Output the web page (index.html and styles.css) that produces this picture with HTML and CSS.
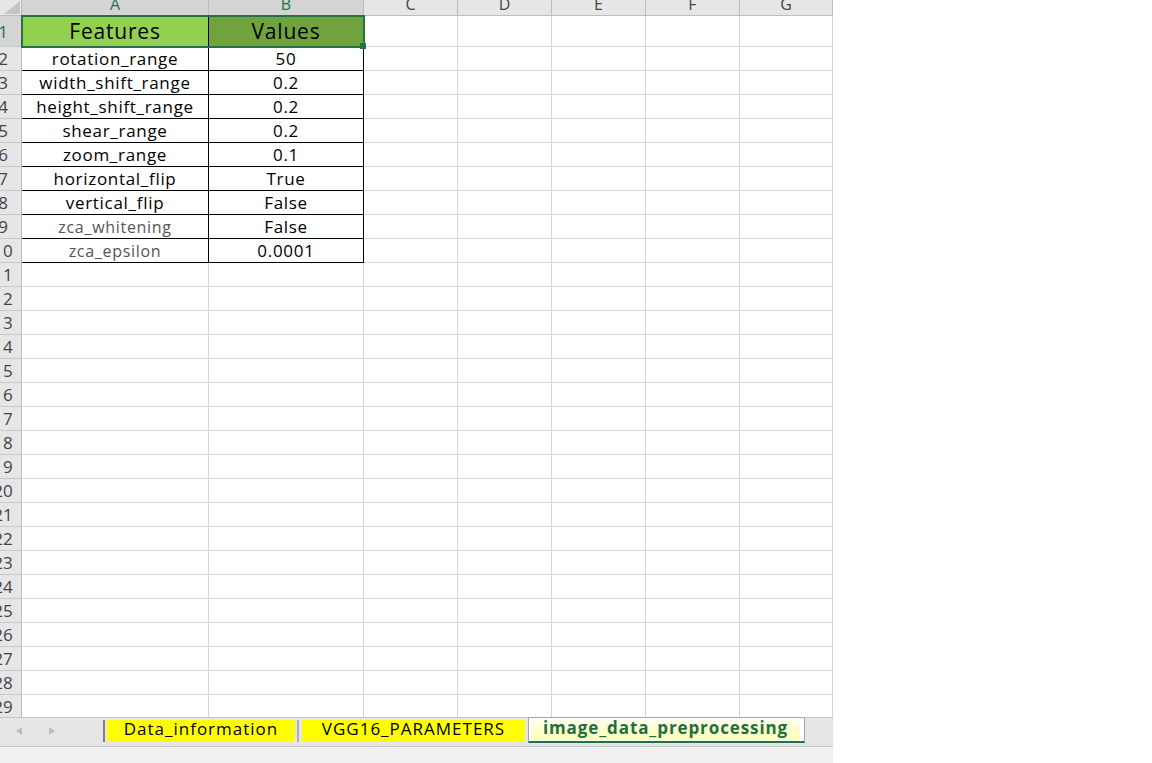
FILE: index.html
```html
<!DOCTYPE html>
<html>
<head>
<meta charset="utf-8">
<link rel="stylesheet" href="styles.css">
</head>
<body>
<div class="app">
  <div class="sheet">
    <div class="row head">
      <div class="corner"><svg width="21" height="15" viewBox="0 0 21 15"><polygon points="4,14 20,14 20,1" fill="#c4c4c4"/></svg></div>
      <div class="ch sel-h">A</div><div class="ch sel-h">B</div><div class="ch">C</div><div class="ch">D</div><div class="ch">E</div><div class="ch">F</div><div class="ch">G</div>
    </div>
    <div class="row r1">
      <div class="rh sel-r">1</div><div class="t f">Features</div><div class="t v">Values</div><div></div><div></div><div></div><div></div><div></div>
    </div>
    <div class="row"><div class="rh">2</div><div class="t">rotation_range</div><div class="t">50</div><div></div><div></div><div></div><div></div><div></div></div>
    <div class="row"><div class="rh">3</div><div class="t">width_shift_range</div><div class="t">0.2</div><div></div><div></div><div></div><div></div><div></div></div>
    <div class="row"><div class="rh">4</div><div class="t">height_shift_range</div><div class="t">0.2</div><div></div><div></div><div></div><div></div><div></div></div>
    <div class="row"><div class="rh">5</div><div class="t">shear_range</div><div class="t">0.2</div><div></div><div></div><div></div><div></div><div></div></div>
    <div class="row"><div class="rh">6</div><div class="t">zoom_range</div><div class="t">0.1</div><div></div><div></div><div></div><div></div><div></div></div>
    <div class="row"><div class="rh">7</div><div class="t">horizontal_flip</div><div class="t">True</div><div></div><div></div><div></div><div></div><div></div></div>
    <div class="row"><div class="rh">8</div><div class="t">vertical_flip</div><div class="t">False</div><div></div><div></div><div></div><div></div><div></div></div>
    <div class="row"><div class="rh">9</div><div class="t z">zca_whitening</div><div class="t">False</div><div></div><div></div><div></div><div></div><div></div></div>
    <div class="row"><div class="rh">10</div><div class="t z">zca_epsilon</div><div class="t">0.0001</div><div></div><div></div><div></div><div></div><div></div></div>
    <div class="row"><div class="rh">11</div><div></div><div></div><div></div><div></div><div></div><div></div><div></div></div>
    <div class="row"><div class="rh">12</div><div></div><div></div><div></div><div></div><div></div><div></div><div></div></div>
    <div class="row"><div class="rh">13</div><div></div><div></div><div></div><div></div><div></div><div></div><div></div></div>
    <div class="row"><div class="rh">14</div><div></div><div></div><div></div><div></div><div></div><div></div><div></div></div>
    <div class="row"><div class="rh">15</div><div></div><div></div><div></div><div></div><div></div><div></div><div></div></div>
    <div class="row"><div class="rh">16</div><div></div><div></div><div></div><div></div><div></div><div></div><div></div></div>
    <div class="row"><div class="rh">17</div><div></div><div></div><div></div><div></div><div></div><div></div><div></div></div>
    <div class="row"><div class="rh">18</div><div></div><div></div><div></div><div></div><div></div><div></div><div></div></div>
    <div class="row"><div class="rh">19</div><div></div><div></div><div></div><div></div><div></div><div></div><div></div></div>
    <div class="row"><div class="rh">20</div><div></div><div></div><div></div><div></div><div></div><div></div><div></div></div>
    <div class="row"><div class="rh">21</div><div></div><div></div><div></div><div></div><div></div><div></div><div></div></div>
    <div class="row"><div class="rh">22</div><div></div><div></div><div></div><div></div><div></div><div></div><div></div></div>
    <div class="row"><div class="rh">23</div><div></div><div></div><div></div><div></div><div></div><div></div><div></div></div>
    <div class="row"><div class="rh">24</div><div></div><div></div><div></div><div></div><div></div><div></div><div></div></div>
    <div class="row"><div class="rh">25</div><div></div><div></div><div></div><div></div><div></div><div></div><div></div></div>
    <div class="row"><div class="rh">26</div><div></div><div></div><div></div><div></div><div></div><div></div><div></div></div>
    <div class="row"><div class="rh">27</div><div></div><div></div><div></div><div></div><div></div><div></div><div></div></div>
    <div class="row"><div class="rh">28</div><div></div><div></div><div></div><div></div><div></div><div></div><div></div></div>
    <div class="row"><div class="rh">29</div><div></div><div></div><div></div><div></div><div></div><div></div><div></div></div>
    <div class="selection"></div>
    <div class="handle"></div>
  </div>
  <div class="tabs">
    <div class="nav"><svg width="103" height="28" viewBox="0 0 103 28"><polygon points="22,9 22,17 16,13" fill="#bdbdbd"/><polygon points="49,9 49,17 55,13" fill="#bdbdbd"/></svg></div>
    <div class="sep1"></div>
    <div class="tab t1">Data_information</div>
    <div class="sep2"></div>
    <div class="tab t2">VGG16_PARAMETERS</div>
    <div class="active"><div class="inner">image_data_preprocessing</div></div>
  </div>
  <div class="status"></div>
</div>
</body>
</html>
```
FILE: styles.css
```css
* { box-sizing: border-box; }
body { margin: 0; background: #fff; font-family: "Open Sans", sans-serif; }
.app { width: 833px; }
.sheet { position: relative; height: 717px; overflow: hidden; }
.row {
  display: grid;
  grid-template-columns: 22px 187px 155px 94px 94px 94px 94px 93px;
  height: 24px;
}
.row.head { height: 16px; }
.row.r1 { height: 31px; }
.row > div {
  border-right: 1px solid #d4d4d4;
  border-bottom: 1px solid #d4d4d4;
  display: flex;
  align-items: center;
  justify-content: center;
  overflow: hidden;
  white-space: nowrap;
  font-size: 17px;
  letter-spacing: 0.7px;
  color: #000;
}
.row > .corner {
  background: #e6e6e6;
  border-right-color: #bdbdbd;
  border-bottom-color: #bdbdbd;
  align-items: flex-start;
  justify-content: flex-start;
}
.corner svg { display: block; }
.row > .ch {
  background: #e6e6e6;
  border-right-color: #bdbdbd;
  border-bottom-color: #bdbdbd;
  align-items: flex-start;
  font-size: 16px;
  line-height: 8px;
  letter-spacing: 0;
  color: #444;
}
.row > .ch.sel-h { background: #d4d4d4; color: #217346; }
.row > .rh {
  background: #e6e6e6;
  border-right-color: #bdbdbd;
  border-bottom-color: #c8c8c8;
  padding-right: 15px;
  letter-spacing: 0;
  color: #444;
}
.row > .rh.sel-r { background: #d4d4d4; color: #217346; }
.row > .t { border-right-color: #000; border-bottom-color: #000; }
.row > .f { background: #92d050; font-size: 21px; letter-spacing: 0.8px; }
.row > .v { background: #70a33e; font-size: 21px; letter-spacing: 0.8px; }
.row > .z { font-size: 16px; color: #555; }
.selection {
  position: absolute;
  top: 15px;
  left: 21px;
  width: 344px;
  height: 33px;
  border: 2px solid #217346;
}
.handle {
  position: absolute;
  left: 360px;
  top: 43px;
  width: 6px;
  height: 6px;
  background: #217346;
}
.tabs {
  display: flex;
  align-items: flex-start;
  height: 29px;
  border-top: 1px solid #c6c6c6;
  background: #e6e6e6;
}
.nav { width: 103px; height: 28px; }
.nav svg { display: block; }
.sep1 { width: 2px; height: 22px; margin: 2px 2px 0 0; background: #808080; }
.sep2 { width: 2px; height: 22px; margin: 2px 3px 0 2px; background: #b0b0b0; }
.tab {
  height: 22px;
  margin-top: 2px;
  padding-bottom: 6px;
  background: #ffff00;
  display: flex;
  align-items: center;
  justify-content: center;
  font-size: 17px;
  letter-spacing: 1px;
  color: #000;
  white-space: nowrap;
}
.t1 { width: 188px; }
.t2 { width: 223px; }
.active {
  margin-left: 3px;
  margin-top: -1px;
  width: 277px;
  height: 26px;
  border: 1px solid #a6a6a6;
  border-bottom: 2px solid #217346;
  background: #fff;
  padding: 1px 4px 1px 2px;
}
.inner {
  height: 100%;
  padding-bottom: 4px;
  background: linear-gradient(#fffff0, #ffffb0);
  display: flex;
  align-items: center;
  justify-content: center;
  font-size: 17px;
  font-weight: 700;
  letter-spacing: 0.9px;
  color: #1f6e43;
  white-space: nowrap;
}
.status { height: 17px; border-top: 1px solid #c6c6c6; background: #f0f0f0; }
```
